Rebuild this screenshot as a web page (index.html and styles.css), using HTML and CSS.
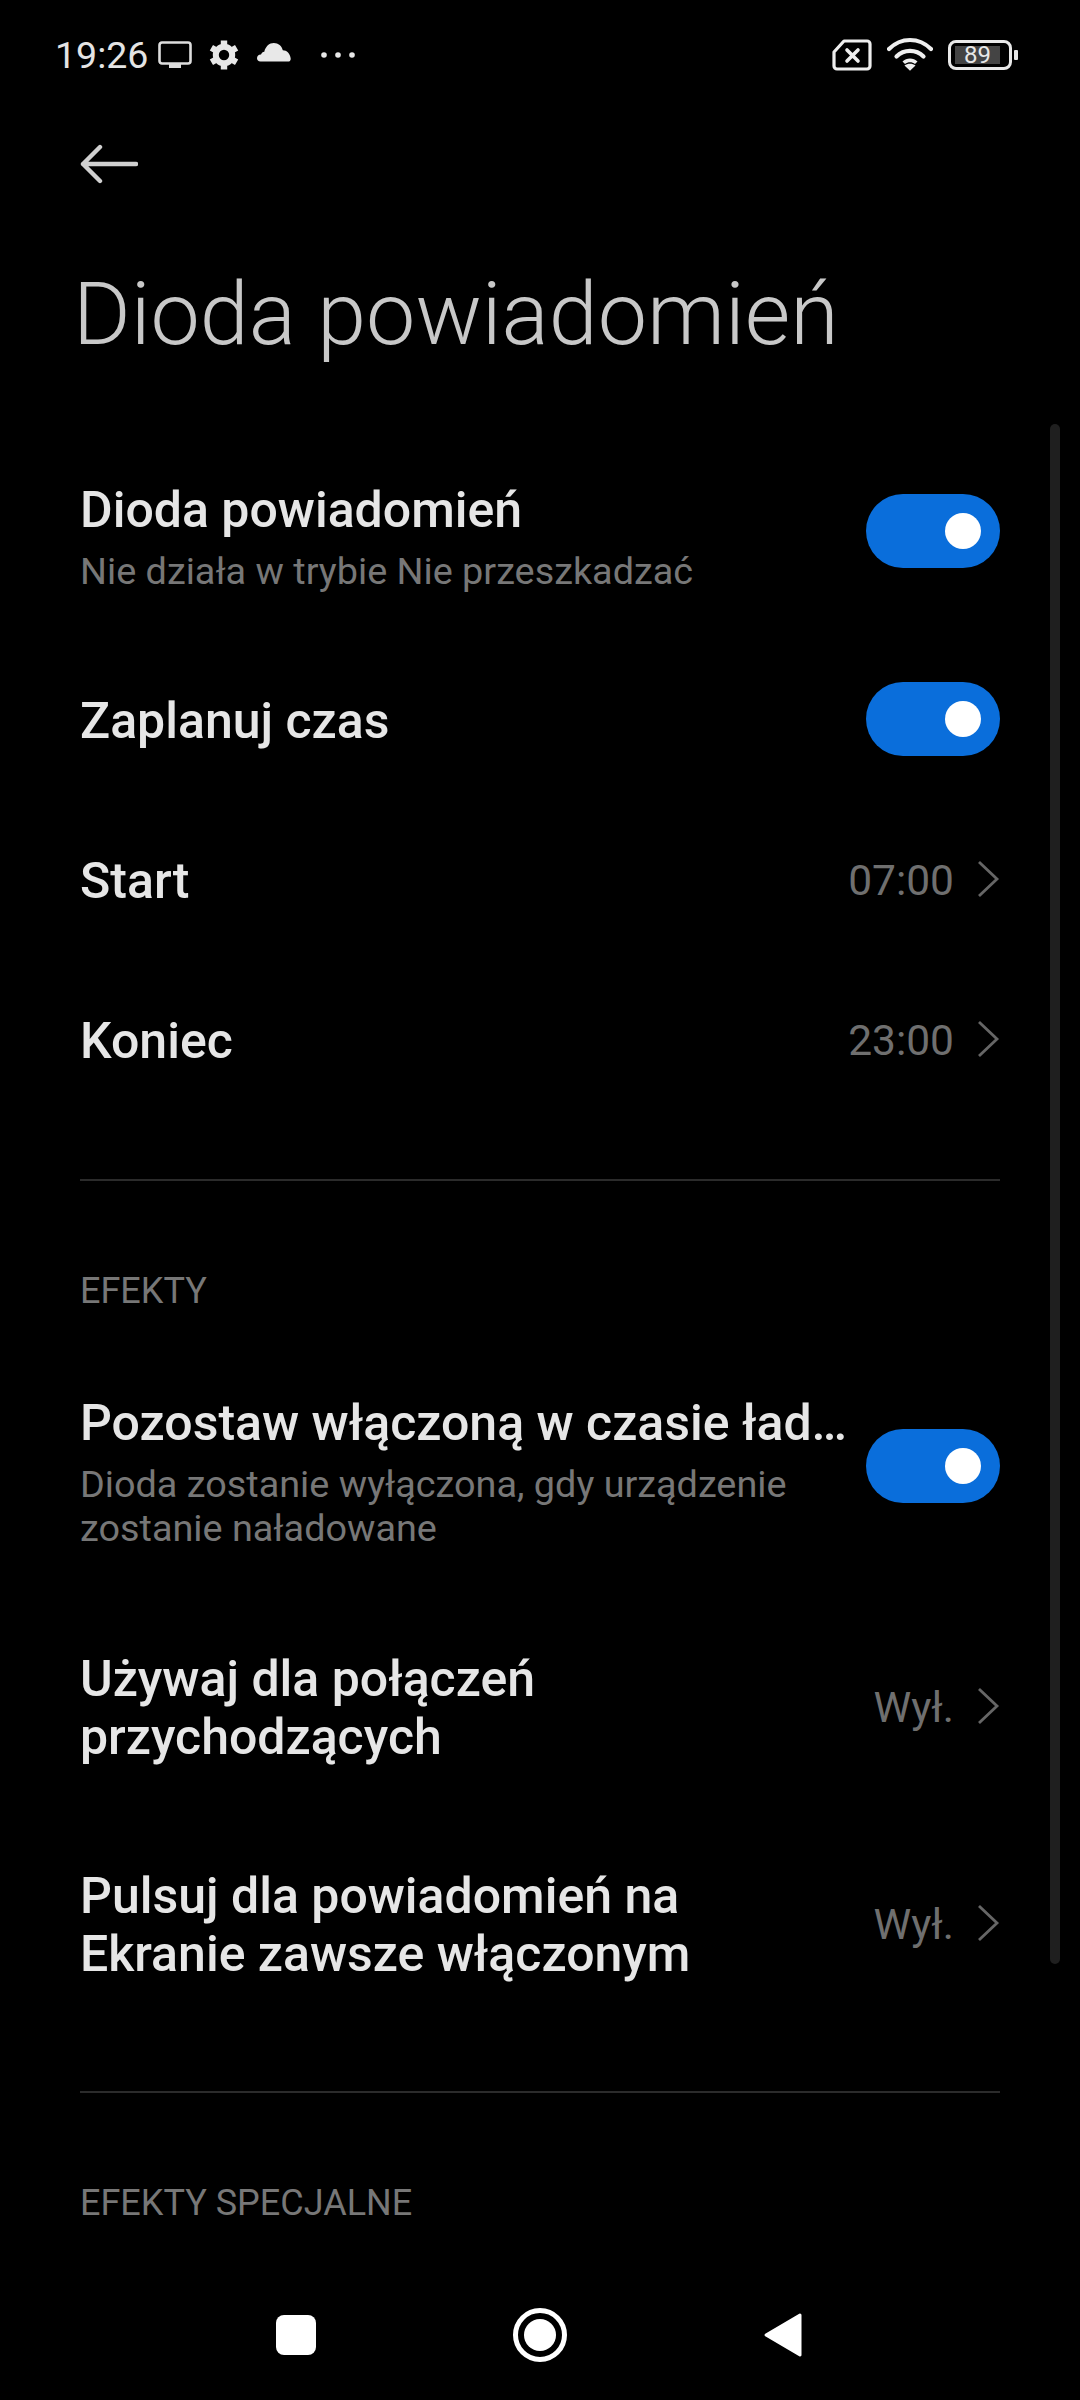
FILE: index.html
```html
<!DOCTYPE html>
<html lang="pl">
<head>
<meta charset="utf-8">
<title>Dioda powiadomień</title>
<link rel="stylesheet" href="styles.css">
</head>
<body>
<div class="screen">
  <header class="status">
    <div class="status-left">
      <span class="time">19:26</span>
      <svg class="ic-tv" viewBox="0 0 34 28"><rect x="1.5" y="1.5" width="31" height="21" rx="2.5" fill="none" stroke="currentColor" stroke-width="2.6"/><rect x="11" y="23" width="12" height="4" fill="currentColor"/></svg>
      <svg class="ic-gear" viewBox="0 0 30 30"><circle cx="15" cy="15" r="8.2" fill="none" stroke="currentColor" stroke-width="6"/><g stroke="currentColor" stroke-width="6.4"><path d="M15 0.5V6M15 24V29.5M2.4 7.7L7.2 10.5M22.8 19.5L27.6 22.3M2.4 22.3L7.2 19.5M22.8 10.5L27.6 7.7"/></g></svg>
      <svg class="ic-cloud" viewBox="0 0 34 20"><path fill="currentColor" d="M3.5 19.5C1.3 19.5 0 18 0 16.2 0 14 1.8 12.4 4 12.5 4.6 11 5.8 10 7.3 9.8 8.4 4.4 12.4 1 16.8 1c4.6 0 8 3 9 7.2 4 0 7.4 3.4 7.9 8.2.2 1.900-.9 3.100-2.700 3.100z"/></svg>
      <svg class="ic-dots" viewBox="0 0 36 6"><circle cx="3" cy="3" r="2.800" fill="currentColor"/><circle cx="17" cy="3" r="2.800" fill="currentColor"/><circle cx="31" cy="3" r="2.800" fill="currentColor"/></svg>
    </div>
    <div class="status-right">
      <svg class="ic-sim" viewBox="0 0 40 32"><path d="M12 2H35a3 3 0 0 1 3 3V27a3 3 0 0 1-3 3H5a3 3 0 0 1-3-3V13z" fill="none" stroke="currentColor" stroke-width="3.2" stroke-linejoin="round"/><path d="M15 11L26 22M26 11L15 22" stroke="currentColor" stroke-width="3.6" stroke-linecap="round"/></svg>
      <svg class="ic-wifi" viewBox="0 0 46 34"><g fill="none" stroke="currentColor" stroke-width="4.2" stroke-linecap="round"><path d="M2 12C14 0 32 0 44 12"/><path d="M9.500 19.500C17 12 29 12 36.500 19.500"/></g><path fill="currentColor" d="M15.500 24.500C19.500 20.500 26.500 20.500 30.500 24.500L28 27C25 24.800 21 24.800 18 27z"/><path fill="currentColor" d="M17.500 28.500C20.500 26 25.500 26 28.500 28.500L23 33.800z"/></svg>
      <div class="battery"><div class="battery-body"><span class="battery-level">89</span></div><span class="battery-cap"></span></div>
    </div>
  </header>

  <nav class="topbar"><svg class="ic-back" viewBox="0 0 58 40"><path d="M20 3L3 20L20 37M3 20H56" fill="none" stroke="currentColor" stroke-width="4.4" stroke-linecap="round" stroke-linejoin="round"/></svg></nav>
  <h1 class="title">Dioda powiadomień</h1>

  <main class="list">
    <section class="group">
      <div class="row row-first">
        <div class="row-text has-sub"><div class="row-title">Dioda powiadomień</div><div class="row-sub">Nie działa w trybie Nie przeszkadzać</div></div>
        <span class="toggle"><span class="thumb"></span></span>
      </div>
      <div class="row">
        <div class="row-text"><div class="row-title">Zaplanuj czas</div></div>
        <span class="toggle"><span class="thumb"></span></span>
      </div>
      <div class="row">
        <div class="row-text"><div class="row-title">Start</div></div>
        <span class="value">07:00</span>
        <svg class="chev" viewBox="0 0 22 38"><path d="M1 2L19 19L1 36" fill="none" stroke="currentColor" stroke-width="2.800"/></svg>
      </div>
      <div class="row">
        <div class="row-text"><div class="row-title">Koniec</div></div>
        <span class="value">23:00</span>
        <svg class="chev" viewBox="0 0 22 38"><path d="M1 2L19 19L1 36" fill="none" stroke="currentColor" stroke-width="2.800"/></svg>
      </div>
    </section>
    <hr class="divider">
    <div class="section-label">EFEKTY</div>
    <section class="group">
      <div class="row row-tall">
        <div class="row-text has-sub"><div class="row-title nowrap">Pozostaw włączoną w czasie ład…</div><div class="row-sub">Dioda zostanie wyłączona, gdy urządzenie<br>zostanie naładowane</div></div>
        <span class="toggle"><span class="thumb"></span></span>
      </div>
      <div class="row row-two">
        <div class="row-text"><div class="row-title">Używaj dla połączeń<br>przychodzących</div></div>
        <span class="value">Wył.</span>
        <svg class="chev" viewBox="0 0 22 38"><path d="M1 2L19 19L1 36" fill="none" stroke="currentColor" stroke-width="2.800"/></svg>
      </div>
      <div class="row row-two">
        <div class="row-text"><div class="row-title">Pulsuj dla powiadomień na<br>Ekranie zawsze włączonym</div></div>
        <span class="value">Wył.</span>
        <svg class="chev" viewBox="0 0 22 38"><path d="M1 2L19 19L1 36" fill="none" stroke="currentColor" stroke-width="2.800"/></svg>
      </div>
    </section>
    <hr class="divider">
    <div class="section-label">EFEKTY SPECJALNE</div>
  </main>

  <div class="scrollbar"></div>

  <footer class="navbar">
    <span class="nav-square"></span>
    <span class="nav-home"><span class="nav-home-dot"></span></span>
    <svg class="nav-back" viewBox="0 0 40 46"><path d="M37 3L3 23L37 43z" fill="#fff" stroke="#fff" stroke-width="3" stroke-linejoin="round"/></svg>
  </footer>
</div>
</body>
</html>
```
FILE: styles.css
```css
* { box-sizing: border-box; }
html, body { margin: 0; padding: 0; background: #000; }
.screen {
  position: relative;
  width: 1080px;
  height: 2400px;
  overflow: hidden;
  background: #000;
  color: #e6e6e6;
  font-family: Roboto, "Noto Sans", sans-serif;
}
.status {
  display: flex;
  justify-content: space-between;
  align-items: center;
  height: 108px;
  padding: 2px 62px 0 55px;
}
.status-left, .status-right { display: flex; align-items: center; }
.time { font-size: 37.5px; color: #e4e4e4; }
.ic-tv { width: 34px; height: 28px; margin-left: 10px; color: #ddd; }
.ic-gear { width: 30px; height: 30px; margin-left: 17px; color: #e8e8e8; }
.ic-cloud { width: 34px; height: 20px; margin-left: 18px; margin-top: -6px; color: #e8e8e8; }
.ic-dots { width: 36px; height: 6px; margin-left: 30px; color: #e8e8e8; }
.ic-sim { width: 40px; height: 32px; color: #eee; }
.ic-wifi { width: 46px; height: 34px; margin-left: 15px; color: #eee; margin-top: -2px; }
.battery { display: flex; align-items: center; margin-left: 15px; }
.battery-body {
  display: flex;
  width: 64px;
  height: 30px;
  padding: 3px 9px 3px 4px;
  border: 3px solid #e8e8e8;
  border-radius: 8px;
}
.battery-level {
  flex: 1;
  background: #444;
  color: #e8e8e8;
  font-size: 24px;
  line-height: 18px;
  text-align: center;
}
.battery-cap { width: 4px; height: 10px; margin-left: 2px; background: #e8e8e8; border-radius: 1px; }

.topbar { height: 80px; padding: 36px 0 0 80px; }
.ic-back { display: block; width: 58px; height: 40px; color: #d0d0d0; }
.title {
  margin: 0;
  padding: 76px 0 0 73px;
  font-size: 88px;
  line-height: 100px;
  font-weight: 300;
  color: #c8c8c8;
}
.list { padding: 59px 0 0 80px; width: 1000px; }
.group { display: flex; flex-direction: column; }
.row { display: flex; align-items: center; min-height: 160px; }
.row-first { height: 216px; }
.row-tall { height: 263px; }
.row-two { height: 217px; }
.row-text { flex: 1; min-width: 0; padding-top: 4px; }
.has-sub { padding-top: 12px; }
.row-title { font-size: 50px; line-height: 58px; font-weight: 500; color: #e6e6e6; }
.nowrap { white-space: nowrap; }
.row-sub { margin-top: 10px; font-size: 37.8px; line-height: 44px; color: #777; }
.toggle {
  position: relative;
  display: block;
  flex: none;
  width: 134px;
  height: 74px;
  border-radius: 37px;
  background: #0a6edb;
}
.thumb {
  position: absolute;
  top: 19px;
  right: 19px;
  width: 36px;
  height: 36px;
  border-radius: 50%;
  background: #fff;
}
.value { padding-top: 3px; font-size: 42.5px; color: #6f6f6f; }
.chev { flex: none; width: 22px; height: 38px; margin-left: 24px; color: #666; }
.divider { margin: 0; border: 0; height: 2px; background: #2b2b2b; }
.section-label { font-size: 36px; line-height: 42px; color: #777; }
.group + .divider { margin-top: 60px; }
.divider + .section-label { margin-top: 89px; margin-bottom: 22px; }

.scrollbar {
  position: absolute;
  top: 424px;
  left: 1050px;
  width: 10px;
  height: 1540px;
  border-radius: 5px;
  background: #1f1f1f;
}
.navbar {
  position: absolute;
  left: 0;
  right: 0;
  bottom: 0;
  height: 130px;
  background: #000;
  display: flex;
  align-items: center;
  justify-content: space-between;
  padding: 0 277px 0 276px;
}
.nav-square { width: 40px; height: 40px; border-radius: 8px; background: #fff; }
.nav-home {
  display: flex;
  align-items: center;
  justify-content: center;
  width: 54px;
  height: 54px;
  border: 5px solid #fff;
  border-radius: 50%;
}
.nav-home-dot { width: 32px; height: 32px; border-radius: 50%; background: #fff; }
.nav-back { width: 40px; height: 46px; }
```
